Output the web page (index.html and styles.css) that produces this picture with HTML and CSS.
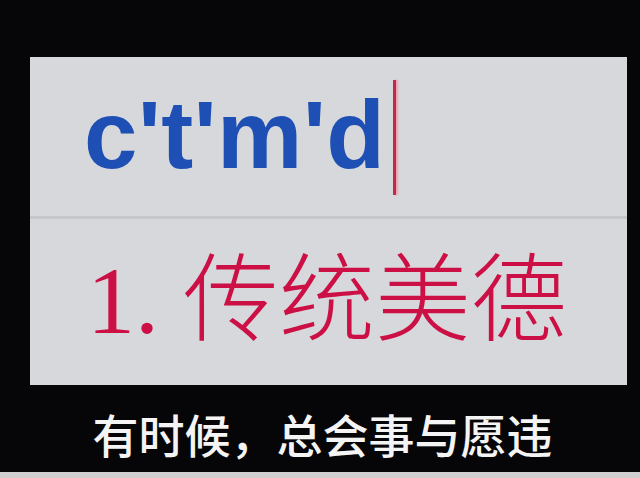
FILE: index.html
```html
<!DOCTYPE html>
<html lang="zh-CN">
<head>
<meta charset="utf-8">
<title>输入法</title>
<link rel="stylesheet" href="styles.css">
</head>
<body>
<div class="screen">
  <div class="ime">
    <div class="comp">
      <span class="pinyin">c't'm'd</span>
      <span class="cursor"></span>
    </div>
    <div class="divider"></div>
    <div class="cand">
      <span class="cand-text"><span class="num">1. </span>传统美德</span>
    </div>
  </div>
  <div class="caption">有时候，总会事与愿违</div>
  <div class="strip"></div>
</div>
</body>
</html>
```

FILE: styles.css
```css
html, body {
  margin: 0;
  padding: 0;
  background: #060608;
}
.screen {
  width: 640px;
  height: 478px;
  display: flex;
  flex-direction: column;
  background: #060608;
  overflow: hidden;
}
.ime {
  margin: 57px 13px 0 30px;
  height: 328px;
  background: #d7d8db;
  display: flex;
  flex-direction: column;
}
.comp {
  height: 159px;
  display: flex;
  align-items: flex-start;
  padding-left: 54px;
  box-sizing: border-box;
}
.pinyin {
  margin-top: 30px;
  font-family: "Liberation Sans", Arial, sans-serif;
  font-weight: 700;
  font-size: 96px;
  line-height: 1;
  color: #1e4fb4;
  letter-spacing: 0.5px;
}
.cursor {
  margin-top: 23px;
  margin-left: 8px;
  width: 3px;
  height: 115px;
  background: #c02a48;
  box-shadow: 2px 0 2px rgba(255, 120, 150, 0.6);
}
.divider {
  height: 3px;
  background: #c6c7ca;
}
.cand {
  flex: 1;
  padding: 34px 0 0 57px;
}
.cand-text {
  font-family: "Liberation Serif", "Noto Sans CJK SC", serif;
  font-size: 96px;
  line-height: 96px;
  color: #cc1046;
  font-weight: 300;
  white-space: nowrap;
}
.num {
  font-family: "Liberation Serif", serif;
  font-weight: 400;
}
.caption {
  height: 87px;
  box-sizing: border-box;
  padding: 25px 0 0 5px;
  text-align: center;
  font-family: "Noto Sans CJK SC", sans-serif;
  font-weight: 500;
  font-size: 46px;
  line-height: 46px;
  color: #f4f4f4;
}
.strip {
  height: 6px;
  background: #cfcfd2;
}
```
